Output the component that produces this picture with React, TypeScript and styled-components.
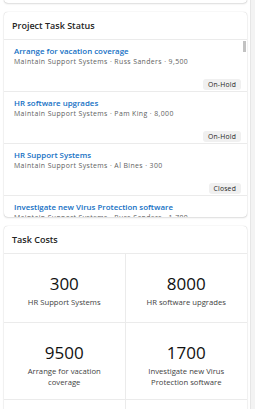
import React from "react";
import styled, { createGlobalStyle } from "styled-components";

const Global = createGlobalStyle`
  html, body { margin: 0; padding: 0; background: #fff; }
  body { font-family: "Open Sans", "Noto Sans", sans-serif; color: #242424; overflow: hidden; }
  * { box-sizing: border-box; }
`;

const Page = styled.div`
  display: flex;
  width: 255px;
  height: 409px;
  overflow: hidden;
`;

const Main = styled.div`
  flex: 1;
  display: flex;
  flex-direction: column;
  gap: 9px;
  padding: 0 3px 0 4px;
  margin-top: -8px;
`;

const PageScroll = styled.div`
  width: 5px;
  background: #f3f3f3;
  border-left: 1px solid #e6e6e6;
`;

const Card = styled.div<{ $h?: number }>`
  background: #fff;
  border-radius: 4px;
  box-shadow: 0 0 1px rgba(0,0,0,0.25), 0 1px 2px rgba(0,0,0,0.12);
  overflow: hidden;
  flex-shrink: 0;
  display: flex;
  flex-direction: column;
  ${(p) => (p.$h ? `height: ${p.$h}px;` : "")}
`;

const CardHeader = styled.div`
  height: 28px;
  padding: 0 8px;
  display: flex;
  align-items: center;
  font-size: 9px;
  font-weight: 600;
  color: #242424;
  border-bottom: 1px solid #ebebeb;
  flex-shrink: 0;
`;

const ListWrap = styled.div`
  position: relative;
  flex: 1;
  overflow: hidden;
`;

const List = styled.div`
  display: flex;
  flex-direction: column;
`;

const Item = styled.div`
  height: 52px;
  padding: 5px 6px 0 10px;
  border-bottom: 1px solid #ebebeb;
  display: flex;
  flex-direction: column;
`;

const ItemTitle = styled.div`
  font-size: 7.9px;
  font-weight: 600;
  color: #1570c4;
  line-height: 12px;
  white-space: nowrap;
`;

const ItemSub = styled.div`
  font-size: 6.9px;
  letter-spacing: 0.4px;
  color: #616161;
  line-height: 10px;
  white-space: nowrap;
`;

const BadgeRow = styled.div`
  display: flex;
  justify-content: flex-end;
  margin-top: 12px;
`;

const Badge = styled.span`
  background: #f0f0f0;
  border-radius: 3px;
  font-size: 6.8px;
  letter-spacing: 0.2px;
  color: #242424;
  padding: 0 5px;
  line-height: 11px;
  height: 11px;
`;

const Thumb = styled.div`
  position: absolute;
  right: 1px;
  top: 1px;
  width: 3px;
  height: 11px;
  background: #c2c2c2;
`;

const Grid = styled.div`
  display: grid;
  grid-template-columns: 1fr 1fr;
`;

const Cell = styled.div<{ $right?: boolean }>`
  display: flex;
  flex-direction: column;
  align-items: center;
  min-height: 69px;
  padding: 19px 0 11px;
  border-bottom: 1px solid #ebebeb;
  ${(p) => (p.$right ? "" : "border-right: 1px solid #ebebeb;")}
`;

const Value = styled.div`
  font-size: 17px;
  font-weight: 400;
  line-height: 22px;
  color: #111;
`;

const Label = styled.div`
  font-size: 7.7px;
  color: #424242;
  line-height: 11px;
  text-align: center;
  max-width: 86px;
  margin-top: 2px;
`;

const tasks = [
  { title: "Arrange for vacation coverage", sub: "Maintain Support Systems · Russ Sanders · 9,500", status: "On-Hold" },
  { title: "HR software upgrades", sub: "Maintain Support Systems · Pam King · 8,000", status: "On-Hold" },
  { title: "HR Support Systems", sub: "Maintain Support Systems · Al Bines · 300", status: "Closed" },
  { title: "Investigate new Virus Protection software", sub: "Maintain Support Systems · Russ Sanders · 1,700", status: "Open" },
];

const costs = [
  { v: "300", l: "HR Support Systems" },
  { v: "8000", l: "HR software upgrades" },
  { v: "9500", l: "Arrange for vacation coverage" },
  { v: "1700", l: "Investigate new Virus Protection software" },
  { v: "", l: "" },
  { v: "", l: "" },
];

export default function App() {
  return (
    <>
      <Global />
      <Page>
        <Main>
          <Card $h={11} />
          <Card $h={205}>
            <CardHeader>Project Task Status</CardHeader>
            <ListWrap>
              <List>
                {tasks.map((t) => (
                  <Item key={t.title}>
                    <ItemTitle>{t.title}</ItemTitle>
                    <ItemSub>{t.sub}</ItemSub>
                    <BadgeRow>
                      <Badge>{t.status}</Badge>
                    </BadgeRow>
                  </Item>
                ))}
              </List>
              <Thumb />
            </ListWrap>
          </Card>
          <Card>
            <CardHeader>Task Costs</CardHeader>
            <Grid>
              {costs.map((c, i) => (
                <Cell key={i} $right={i % 2 === 1}>
                  <Value>{c.v}</Value>
                  <Label>{c.l}</Label>
                </Cell>
              ))}
            </Grid>
          </Card>
        </Main>
        <PageScroll />
      </Page>
    </>
  );
}
